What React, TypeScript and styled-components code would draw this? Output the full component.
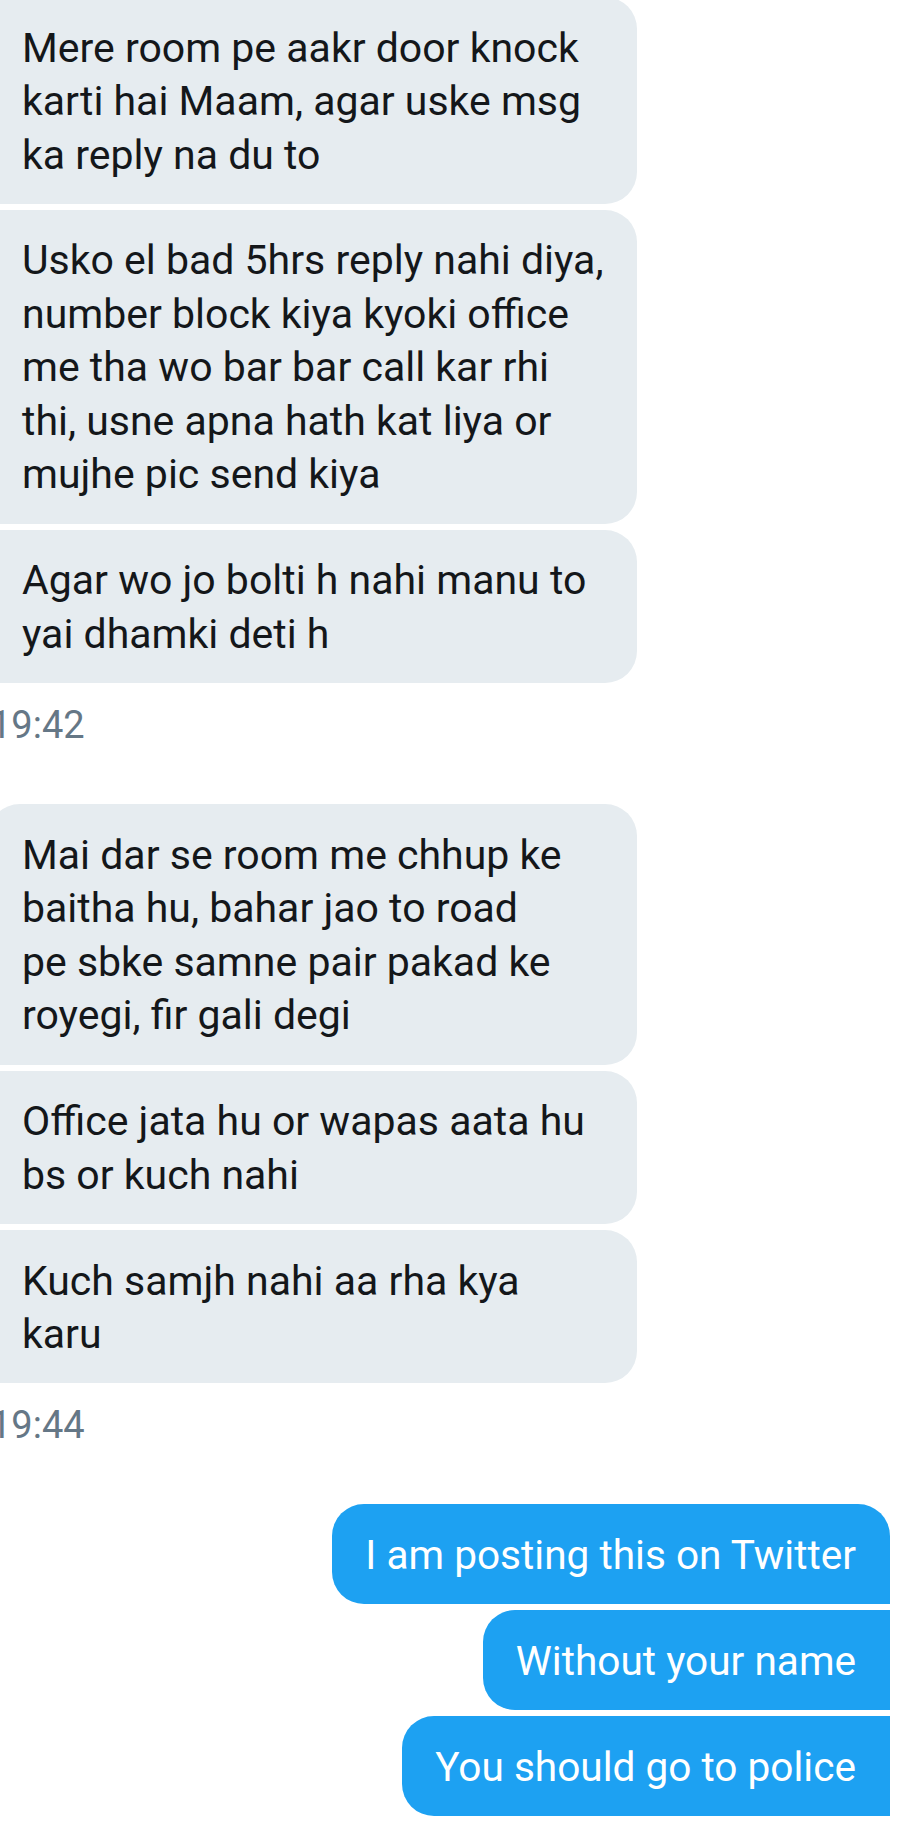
import React from "react";
import styled, { createGlobalStyle } from "styled-components";

const GlobalStyle = createGlobalStyle`
  html, body {
    margin: 0;
    padding: 0;
    background: #ffffff;
    overflow-x: hidden;
  }
  body {
    font-family: Roboto, "Noto Sans", "Liberation Sans", sans-serif;
    -webkit-font-smoothing: antialiased;
  }
`;

const Thread = styled.main`
  display: flex;
  flex-direction: column;
  width: 914px;
  min-height: 1825px;
  padding: 0 24px 0 0;
  box-sizing: border-box;
  margin-top: -3px;
`;

const Group = styled.section<{ $sent?: boolean }>`
  display: flex;
  flex-direction: column;
  gap: 6px;
  align-items: ${(p) => (p.$sent ? "flex-end" : "flex-start")};
`;

const Bubble = styled.div<{ $sent?: boolean; $first?: boolean }>`
  box-sizing: border-box;
  font-size: 41px;
  line-height: 53.5px;
  padding: 24.6px 34px 21.8px 34px;
  white-space: nowrap;
  background: ${(p) => (p.$sent ? "#1da1f2" : "#e6ecf0")};
  color: ${(p) => (p.$sent ? "#ffffff" : "#14171a")};
  ${(p) =>
    p.$sent
      ? `
    font-size: 40.6px;
    padding-left: 33px;
    border-radius: 32px ${p.$first ? "32px" : "0"} 0 32px;
  `
      : `
    width: 649px;
    margin-left: -12px;
    border-radius: ${p.$first ? "32px" : "0"} 32px 32px 0;
  `}
`;

const Time = styled.div`
  font-size: 38px;
  line-height: 38px;
  color: #657786;
  margin: 23px 0 60px -10px;
`;

type Msg = { lines: string[] };

const groupOne: Msg[] = [
  { lines: ["Mere room pe aakr door knock", "karti hai Maam, agar uske msg", "ka reply na du to"] },
  {
    lines: [
      "Usko el bad 5hrs reply nahi diya,",
      "number block kiya kyoki office",
      "me tha wo bar bar call kar rhi",
      "thi, usne apna hath kat liya or",
      "mujhe pic send kiya",
    ],
  },
  { lines: ["Agar wo jo bolti h nahi manu to", "yai dhamki deti h"] },
];

const groupTwo: Msg[] = [
  {
    lines: [
      "Mai dar se room me chhup ke",
      "baitha hu, bahar jao to road",
      "pe sbke samne pair pakad ke",
      "royegi, fir gali degi",
    ],
  },
  { lines: ["Office jata hu or wapas aata hu", "bs or kuch nahi"] },
  { lines: ["Kuch samjh nahi aa rha kya", "karu"] },
];

const sent = ["I am posting this on Twitter", "Without your name", "You should go to police"];

const Lines = ({ lines }: { lines: string[] }) => (
  <>
    {lines.map((l, i) => (
      <React.Fragment key={i}>
        {i > 0 && <br />}
        {l}
      </React.Fragment>
    ))}
  </>
);

export default function App() {
  return (
    <>
      <GlobalStyle />
      <Thread>
        <Group>
          {groupOne.map((m, i) => (
            <Bubble key={i} $first={false}>
              <Lines lines={m.lines} />
            </Bubble>
          ))}
        </Group>
        <Time>19:42</Time>
        <Group>
          {groupTwo.map((m, i) => (
            <Bubble key={i} $first={i === 0}>
              <Lines lines={m.lines} />
            </Bubble>
          ))}
        </Group>
        <Time>19:44</Time>
        <Group $sent>
          {sent.map((t, i) => (
            <Bubble key={i} $sent $first={i === 0}>
              {t}
            </Bubble>
          ))}
        </Group>
      </Thread>
    </>
  );
}
